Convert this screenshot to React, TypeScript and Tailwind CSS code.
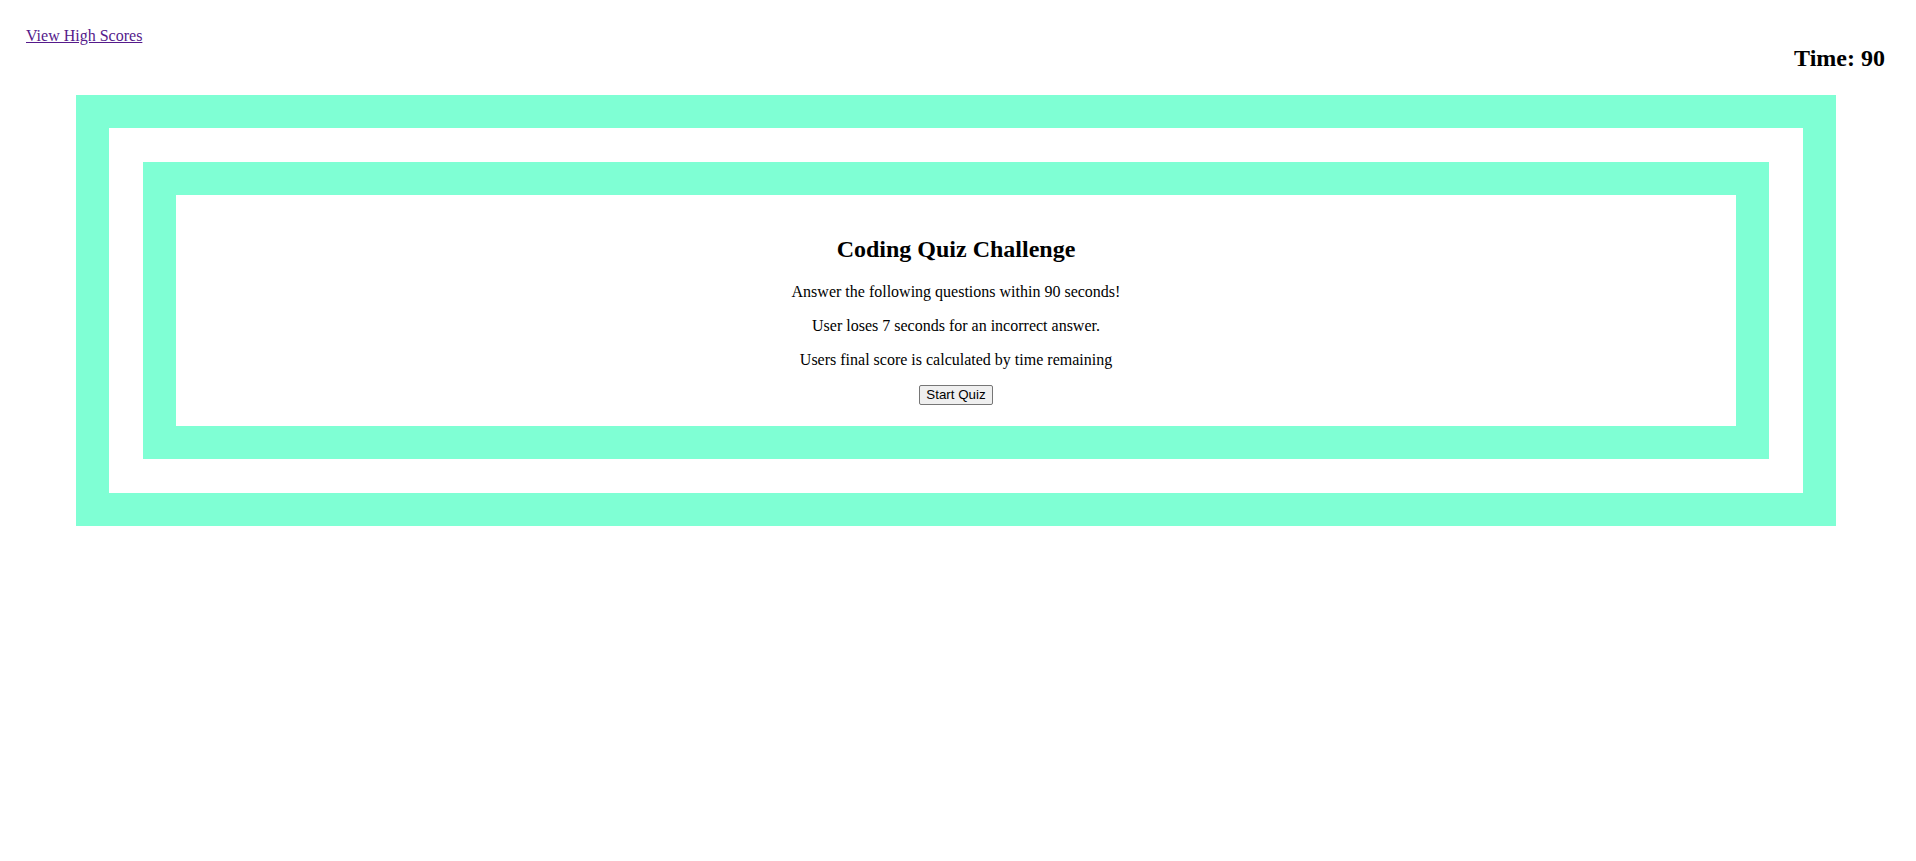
export default function App() {
  return (
    <div className="min-h-[861px] bg-white text-black font-['Liberation_Serif',serif]">
      {/* Header */}
      <header className="flex justify-between items-start pl-[26px] pr-[31px]">
        <a href="#" className="mt-[27px] text-[16px] leading-[18px] text-[#551a8b] underline">
          View High Scores
        </a>
        <h2 className="mt-[44px] text-[24px] leading-[28px] font-bold">Time: 90</h2>
      </header>

      {/* Quiz frame */}
      <main className="mt-[23px] ml-[76px] w-[1760px] border-[33px] border-[#7fffd4] p-[34px]">
        <div className="border-[33px] border-[#7fffd4]">
          <div className="px-[20px] pt-[20px] pb-[20px] text-center">
            <h1 className="mt-[20px] text-[24px] leading-[28px] font-bold">Coding Quiz Challenge</h1>
            <p className="mt-[20px] text-[16px] leading-[18px]">
              Answer the following questions within 90 seconds!
            </p>
            <p className="mt-[16px] text-[16px] leading-[18px]">
              User loses 7 seconds for an incorrect answer.
            </p>
            <p className="mt-[16px] text-[16px] leading-[18px]">
              Users final score is calculated by time remaining
            </p>
            <button className="mt-[16px] h-[20px] px-[6px] bg-[#efefef] border border-[#767676] rounded-[2px] text-[13.33px] leading-[16px] font-['Liberation_Sans',sans-serif] text-black">
              Start Quiz
            </button>
          </div>
        </div>
      </main>
    </div>
  );
}
